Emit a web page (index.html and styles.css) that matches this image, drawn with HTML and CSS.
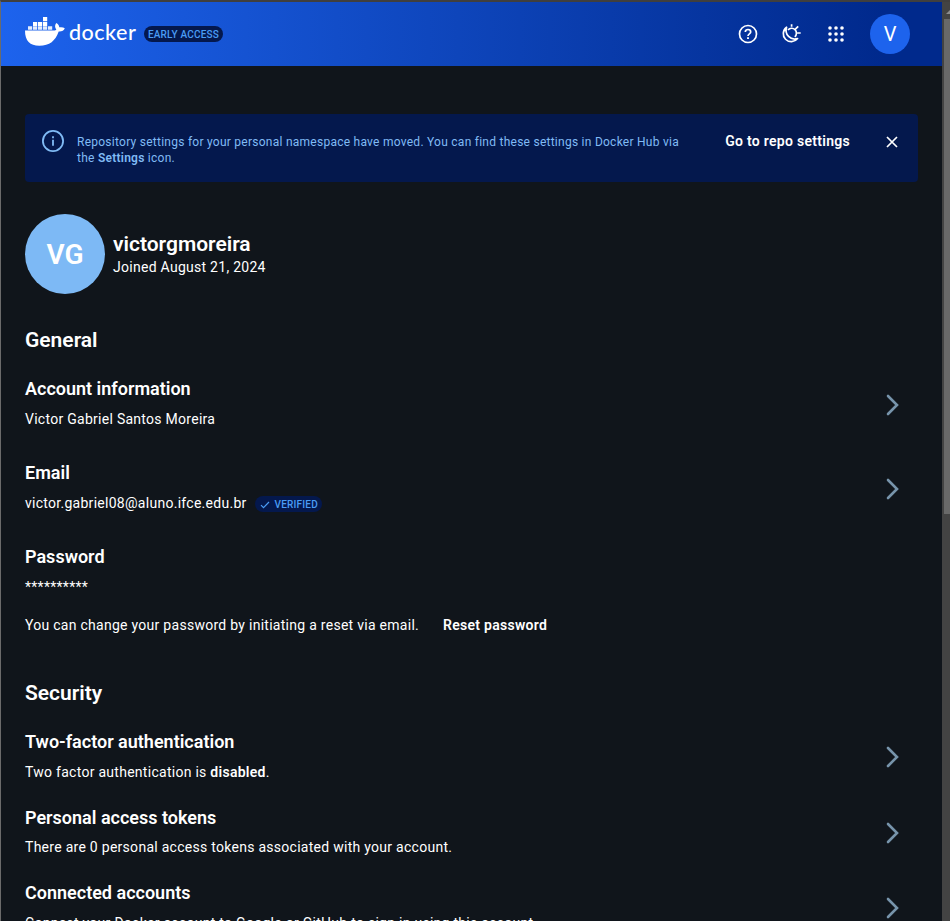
FILE: index.html
```html
<!DOCTYPE html>
<html lang="en">
<head>
<meta charset="utf-8">
<title>Account settings | Docker</title>
<link rel="stylesheet" href="styles.css">
</head>
<body>
<div class="window">
  <div class="page">
    <header class="topbar">
      <div class="brand">
        <svg class="whale" width="40" height="30" viewBox="0 0 40 30" fill="currentColor">
          <path d="M0 13.5H28.6C30 13.5 31 13.2 31.3 12.5C29.8 10.6 29.6 8.2 31.2 6C33 7 34.2 8.4 34.3 10.3C36.4 9.9 38.4 10.2 39.8 11.2C38.8 13.5 36.8 14.6 33.7 14.4C30.4 23.7 24.6 28.7 14.3 28.7C5 28.7 0 24 0 13.5Z"/>
          <path d="M18 0h4.2v4.2H18zM8 4.9h4.2v4.2H8zM13 4.9h4.2v4.2H13zM18 4.9h4.2v4.2H18z"/>
          <path opacity=".88" d="M3 9.3h4.2v3.5H3zM8 9.3h4.2v3.5H8zM13 9.3h4.2v3.5H13zM18 9.3h4.2v3.5H18zM23 9.3h4.2v3.5H23z"/>
        </svg>
        <span class="wordmark">docker</span>
        <span class="chip early">EARLY ACCESS</span>
      </div>
      <nav class="tools">
        <svg width="20" height="20" viewBox="0 0 20 20" fill="none" stroke="currentColor" stroke-width="1.7"><circle cx="10" cy="10" r="8.5"/><path d="M7.3 8.1C7.3 6.5 8.4 5.5 10 5.5S12.7 6.4 12.7 7.9C12.7 9.8 10 9.9 10 12"/><path d="M10 13.3v1.8" stroke-width="1.9"/></svg>
        <svg width="20" height="20" viewBox="0 0 20 20" fill="none" stroke="currentColor" stroke-width="1.7"><path d="M5.6 3.2A8 8 0 1 0 16.6 14.6C9.6 16.8 3.2 10.5 5.6 3.2Z" stroke-linejoin="round"/><path d="M7 6C8.8 3.9 12 3.6 14 5.6C16 7.6 15.9 10.9 13.8 12.8M10.6 .2v2.6M14.4 5.2l2.8-2.9M16.3 9h3.4"/></svg>
        <svg width="20" height="20" viewBox="0 0 20 20" fill="currentColor"><circle cx="4" cy="4" r="1.8"/><circle cx="10" cy="4" r="1.8"/><circle cx="16" cy="4" r="1.8"/><circle cx="4" cy="10" r="1.8"/><circle cx="10" cy="10" r="1.8"/><circle cx="16" cy="10" r="1.8"/><circle cx="4" cy="16" r="1.8"/><circle cx="10" cy="16" r="1.8"/><circle cx="16" cy="16" r="1.8"/></svg>
        <span class="avatar">V</span>
      </nav>
    </header>
    <main class="content">
      <div class="notice">
        <svg class="info" width="22" height="22" viewBox="0 0 22 22" fill="none" stroke="currentColor" stroke-width="1.8"><circle cx="11" cy="11" r="10.1"/><path d="M11 9.8v6M11 6.2v2"/></svg>
        <p class="message">Repository settings for your personal namespace have moved. You can find these settings in Docker Hub via<br>the <b>Settings</b> icon.</p>
        <span class="action">Go to repo settings</span>
        <svg class="close" width="12" height="12" viewBox="0 0 12 12" stroke="currentColor" stroke-width="1.7"><path d="M1 1l10 10M11 1L1 11"/></svg>
      </div>
      <section class="profile">
        <span class="portrait">VG</span>
        <div>
          <h1>victorgmoreira</h1>
          <p>Joined August 21, 2024</p>
        </div>
      </section>
      <h2>General</h2>
      <section class="rows general">
        <div class="row">
          <div><h3>Account information</h3><p>Victor Gabriel Santos Moreira</p></div>
          <svg class="chevron" width="14" height="22" viewBox="0 0 14 22"><path d="M2 2l9 9-9 9"/></svg>
        </div>
        <div class="row">
          <div><h3>Email</h3><p class="mail"><span>victor.gabriel08@aluno.ifce.edu.br</span><span class="chip verified"><svg width="10" height="8" viewBox="0 0 10 8"><path d="M1 4.2l2.5 2.5L9 1"/></svg>VERIFIED</span></p></div>
          <svg class="chevron" width="14" height="22" viewBox="0 0 14 22"><path d="M2 2l9 9-9 9"/></svg>
        </div>
        <div>
          <h3>Password</h3>
          <p>**********</p>
          <p class="reset"><span>You can change your password by initiating a reset via email.</span><b>Reset password</b></p>
        </div>
      </section>
      <h2 class="security-title">Security</h2>
      <section class="rows security">
        <div class="row">
          <div><h3>Two-factor authentication</h3><p>Two factor authentication is <b>disabled</b>.</p></div>
          <svg class="chevron" width="14" height="22" viewBox="0 0 14 22"><path d="M2 2l9 9-9 9"/></svg>
        </div>
        <div class="row tokens">
          <div><h3>Personal access tokens</h3><p>There are 0 personal access tokens associated with your account.</p></div>
          <svg class="chevron" width="14" height="22" viewBox="0 0 14 22"><path d="M2 2l9 9-9 9"/></svg>
        </div>
        <div class="row last">
          <div><h3>Connected accounts</h3><p>Connect your Docker account to Google or GitHub to sign in using this account.</p></div>
          <svg class="chevron" width="14" height="22" viewBox="0 0 14 22"><path d="M2 2l9 9-9 9"/></svg>
        </div>
      </section>
    </main>
  </div>
  <div class="scrollbar"><span class="arrow"></span><div class="thumb"></div></div>
</div>
</body>
</html>
```

FILE: styles.css
```css
* { box-sizing: border-box; }
html, body { height: 100%; overflow: hidden; }
body { margin: 0; background: #10151b; color: #fff; font: 14px/20px Roboto, "Liberation Sans", sans-serif; }
h1, h2, h3, p { margin: 0; }
svg { display: block; flex: none; }
b { font-weight: 600; }
.window { display: flex; height: 921px; border-left: 1px solid #6b6b6b; border-top: 2px solid #403f3e; overflow: hidden; }
.page { width: 941px; flex: none; overflow: hidden; }
.topbar { display: flex; justify-content: space-between; align-items: center; height: 64px; padding: 0 32px 0 24px; background: linear-gradient(90deg, #1d63ed 0%, #00298c 94%); }
.brand { display: flex; align-items: center; }
.whale { margin-top: -4px; }
.wordmark { margin: -4px 0 0 4px; width: 67px; font: 500 21.5px/26px Lato, sans-serif; letter-spacing: .5px; }
.chip { display: flex; align-items: center; height: 16px; border-radius: 8px; background: #04184d; color: #4a9cf5; font-size: 10px; line-height: 16px; font-weight: 500; white-space: nowrap; }
.early { margin-left: 8px; width: 79px; padding-top: 1px; justify-content: center; letter-spacing: .2px; }
.tools { display: flex; align-items: center; gap: 24px; }
.tools svg:nth-child(2) { margin: 0 1px 0 -1px; }
.avatar { width: 40px; height: 40px; border-radius: 50%; background: #1d63ed; font-size: 20px; line-height: 40px; text-align: center; }
.content { padding: 48px 24px 0; }
.notice { display: flex; align-items: flex-start; height: 68px; padding: 16px 20px 0 17px; background: #04184d; border-radius: 4px; color: #80bbf5; }
.content p { font-weight: 450; letter-spacing: .275px; }
.content p b { font-weight: 600; }
.content .message { flex: 1; margin: 4px 0 0 13px; font-size: 12px; line-height: 16px; letter-spacing: .255px; white-space: nowrap; }
.action { margin: 1px 36px 0 0; color: #fff; font-weight: 600; letter-spacing: .29px; white-space: nowrap; }
.close { color: #fff; margin-top: 6px; }
.profile { display: flex; align-items: center; gap: 8px; height: 80px; margin-top: 32px; }
.portrait { width: 80px; height: 80px; border-radius: 50%; background: #7db9f5; font-size: 28px; line-height: 82px; font-weight: 600; text-align: center; }
h1 { font-size: 21px; line-height: 26px; font-weight: 600; }
h2 { font-size: 21px; line-height: 28px; font-weight: 600; margin-top: 32px; }
h3 { font-size: 18px; line-height: 28px; font-weight: 600; margin-bottom: 6px; }
.rows { display: flex; flex-direction: column; margin-top: 21px; }
.general { gap: 30px; }
.security { gap: 22px; }
.row { display: flex; justify-content: space-between; align-items: flex-start; height: 54px; }
.row p { white-space: nowrap; }
.chevron { margin: 18.5px 18.5px 0 0; fill: none; stroke: #7794ab; stroke-width: 2.6; stroke-linecap: round; }
.security .chevron { margin-top: 17.5px; }
.security .last .chevron { margin-top: 18px; }
.tokens { height: 53px; }
.tokens h3 { margin-bottom: 5px; }
.mail { display: flex; align-items: center; gap: 8px; }
.verified { width: 67px; padding: 1px 0 0 5px; gap: 5px; margin-top: 2px; letter-spacing: .2px; }
.verified svg { fill: none; stroke: currentColor; stroke-width: 1.2; }
.reset { display: flex; gap: 24px; }
.content .reset { margin-top: 18px; }
.security-title { margin-top: 44px; }
.scrollbar { width: 8px; flex: none; background: #434343; overflow: hidden; }
.arrow { display: block; width: 0; height: 0; margin: 8px 0 0 4px; border-left: 4px solid transparent; border-right: 4px solid transparent; border-bottom: 4px solid #8d8d8d; }
.thumb { width: 6px; height: 495px; margin: 5px 0 0 2px; background: #696969; }
```
